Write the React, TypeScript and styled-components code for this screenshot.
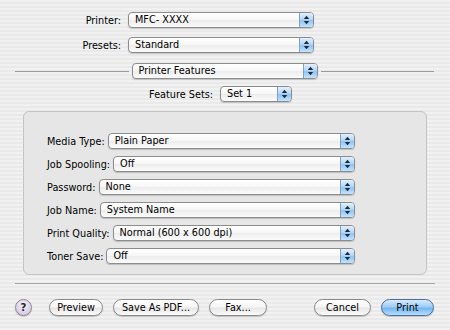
import React, { FC } from "react";
import styled, { createGlobalStyle, css } from "styled-components";

const GlobalStyle = createGlobalStyle`
  html, body {
    margin: 0;
    padding: 0;
    background: #ececec;
  }
  * {
    box-sizing: border-box;
  }
`;

interface PopupProps {
  value: string;
  width?: number;
  grow?: boolean;
}

const Arrows: FC = () => (
  <svg width="7" height="10" viewBox="0 0 7 10">
    <path d="M3.5 0.8 L6.2 4 L0.8 4 Z" fill="#1d2a3a" />
    <path d="M3.5 9.2 L6.2 6 L0.8 6 Z" fill="#1d2a3a" />
  </svg>
);

const Popup: FC<PopupProps> = ({ value, width, grow }) => (
  <PopupBox $width={width} $grow={grow}>
    <PopupText>{value}</PopupText>
    <PopupArrow>
      <Arrows />
    </PopupArrow>
  </PopupBox>
);

const settings = [
  { label: "Media Type:", value: "Plain Paper" },
  { label: "Job Spooling:", value: "Off" },
  { label: "Password:", value: "None" },
  { label: "Job Name:", value: "System Name" },
  { label: "Print Quality:", value: "Normal (600 x 600 dpi)" },
  { label: "Toner Save:", value: "Off" }
];

const App: FC = () => {
  return (
    <>
      <GlobalStyle />
      <Dialog>
        <Row $top={12}>
          <Label $width={125}>Printer:</Label>
          <Popup value="MFC- XXXX" width={186} />
        </Row>
        <Row $top={9}>
          <Label $width={125}>Presets:</Label>
          <Popup value="Standard" width={186} />
        </Row>
        <PaneRow>
          <Line />
          <Popup value="Printer Features" width={186} />
          <Line />
        </PaneRow>
        <Row $top={7}>
          <Label $width={217}>Feature Sets:</Label>
          <Popup value="Set 1" width={72} />
        </Row>
        <GroupBox>
          {settings.map(s => (
            <SettingRow key={s.label}>
              <SettingLabel>{s.label}</SettingLabel>
              <Popup value={s.value} grow />
            </SettingRow>
          ))}
        </GroupBox>
        <Separator />
        <ButtonBar>
          <HelpButton>?</HelpButton>
          <Button $width={54}>Preview</Button>
          <Button $width={86}>Save As PDF...</Button>
          <Button $width={58}>Fax...</Button>
          <Spacer />
          <Button $width={57}>Cancel</Button>
          <Button $width={53} $primary>Print</Button>
        </ButtonBar>
      </Dialog>
    </>
  );
};

const Dialog = styled.div`
  width: 450px;
  height: 330px;
  display: flex;
  flex-direction: column;
  font-family: "DejaVu Sans", "Noto Sans", sans-serif;
  font-size: 9.7px;
  color: #000;
  background: repeating-linear-gradient(
    to bottom,
    #f1f1f1 0px,
    #f1f1f1 2px,
    #e9e9e9 2px,
    #e9e9e9 4px
  );
  overflow: hidden;
`;

const Row = styled.div<{ $top: number }>`
  display: flex;
  align-items: center;
  height: 16px;
  margin-top: ${p => p.$top}px;
`;

const Label = styled.div<{ $width: number }>`
  width: ${p => p.$width}px;
  text-align: right;
  padding-right: 4px;
  white-space: nowrap;
  flex: none;
  margin-right: 3px;
`;

const PaneRow = styled.div`
  display: flex;
  align-items: center;
  gap: 3px;
  height: 16px;
  margin-top: 10px;
  padding: 0 16px 0 15px;
`;

const Line = styled.div`
  flex: 1;
  height: 1px;
  background: #9a9a9a;
`;

const PopupBox = styled.div<{ $width?: number; $grow?: boolean }>`
  display: flex;
  align-items: stretch;
  height: 16px;
  border: 1px solid #8c8c8c;
  border-radius: 4px;
  overflow: hidden;
  background: linear-gradient(to bottom, #ffffff 0%, #f6f6f6 50%, #ececec 51%, #fbfbfb 100%);
  box-shadow: 0 1px 1px rgba(0, 0, 0, 0.18);
  ${p =>
    p.$grow
      ? css`
          flex: 1;
        `
      : css`
          width: ${p.$width}px;
          flex: none;
        `}
`;

const PopupText = styled.div`
  flex: 1;
  padding-left: 6px;
  line-height: 14px;
  white-space: nowrap;
  overflow: hidden;
`;

const PopupArrow = styled.div`
  width: 14px;
  flex: none;
  display: flex;
  align-items: center;
  justify-content: center;
  border-left: 1px solid #7f9fc3;
  background: linear-gradient(to bottom, #e2f0fc 0%, #b4d7f7 45%, #8fc4f3 55%, #c4e3fc 100%);
`;

const GroupBox = styled.div`
  margin: 9px 23px 0 23px;
  height: 164px;
  border: 1px solid #c4c4c4;
  border-radius: 6px;
  background: #e6e6e6;
  padding: 21px 71px 0 23px;
  display: flex;
  flex-direction: column;
  gap: 7px;
`;

const SettingRow = styled.div`
  display: flex;
  align-items: center;
  height: 16px;
  gap: 3px;
`;

const SettingLabel = styled.div`
  white-space: nowrap;
  flex: none;
`;

const Separator = styled.div`
  margin: 8px 15px 0 15px;
  height: 1px;
  background: #a6a6a6;
`;

const ButtonBar = styled.div`
  display: flex;
  align-items: center;
  gap: 10px;
  margin-top: 15px;
  padding: 0 16px 0 15px;
  height: 17px;
`;

const Spacer = styled.div`
  flex: 1;
`;

const HelpButton = styled.div`
  width: 17px;
  height: 17px;
  flex: none;
  border-radius: 50%;
  border: 1px solid #8a8a8a;
  background: radial-gradient(circle at 50% 35%, #f4effa 0%, #ddd2ea 60%, #c9bbdb 100%);
  display: flex;
  align-items: center;
  justify-content: center;
  font-weight: bold;
  font-size: 10px;
  color: #222;
  margin-right: 7px;
  box-shadow: 0 1px 1px rgba(0, 0, 0, 0.2);
`;

const Button = styled.div<{ $width: number; $primary?: boolean }>`
  width: ${p => p.$width}px;
  height: 17px;
  flex: none;
  border-radius: 9px;
  border: 1px solid #8a8a8a;
  display: flex;
  align-items: center;
  justify-content: center;
  font-size: 9.7px;
  white-space: nowrap;
  box-shadow: 0 1px 1px rgba(0, 0, 0, 0.2);
  background: ${p =>
    p.$primary
      ? "linear-gradient(to bottom, #d6eafc 0%, #9fcdf5 45%, #74b6f0 55%, #b6defc 100%)"
      : "linear-gradient(to bottom, #ffffff 0%, #f4f4f4 48%, #e6e6e6 52%, #fafafa 100%)"};
  border-color: ${p => (p.$primary ? "#4d6f99" : "#8a8a8a")};
`;

export default App;
